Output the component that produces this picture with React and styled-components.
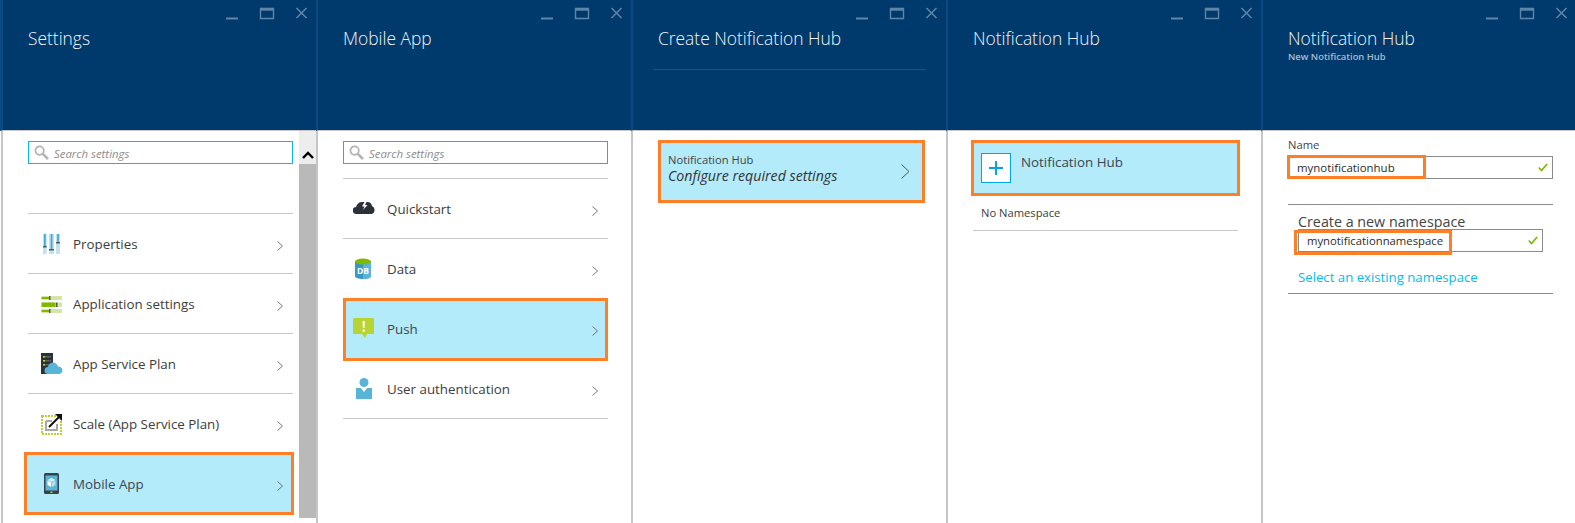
import React from "react";
import styled, { createGlobalStyle } from "styled-components";

const Global = createGlobalStyle`
  html, body { margin: 0; padding: 0; background: #fff; }
  body { font-family: "Open Sans", "Noto Sans", sans-serif; color: #3c3c3c; overflow: hidden; }
`;
const Page = styled.div`
  display: flex;
  width: 1575px;
  height: 523px;
  padding-left: 1px;
  box-sizing: border-box;
  overflow: hidden;
`;
const Blade = styled.section`
  flex: 0 0 315px;
  display: flex;
  flex-direction: column;
  height: 523px;
`;
const Header = styled.header`
  height: 131px;
  flex: none;
  box-sizing: border-box;
  background: #003a6c;
  border-left: ${(p) => (p.$first ? 3 : 2)}px solid #0a4a80;
  margin-left: ${(p) => (p.$first ? -1 : 0)}px;
  border-bottom: 1px solid #c6c6c6;
  padding-right: 8px;
`;
const Controls = styled.div`
  display: flex;
  justify-content: flex-end;
  padding-top: 7px;
  height: 14px;
`;
const Title = styled.h1`
  margin: 5px 0 0 25px;
  font-size: 17.4px;
  line-height: 24px;
  font-weight: 300;
  color: #f2f5f8;
  white-space: nowrap;
`;
const Subtitle = styled.div`
  margin: 1px 0 0 25px;
  font-size: 9.4px;
  line-height: 12px;
  font-weight: 600;
  color: #a7bccf;
`;
const HeaderRule = styled.div`
  margin: 19px 12px 0 20px;
  height: 1px;
  background: #1a5082;
`;
const Body = styled.div`
  flex: 1;
  display: flex;
  border-left: 2px solid #c6c6c6;
  min-height: 0;
`;
const Main = styled.div`
  width: 265px;
  margin-left: 25px;
  padding-top: ${(p) => p.$pt ?? 10}px;
  flex: none;
`;
const Search = styled.div`
  height: 23px;
  box-sizing: border-box;
  border: 1px solid ${(p) => (p.$focus ? "#00bcf2" : "#8a8a8a")};
  display: flex;
  align-items: center;
  padding-left: 5px;
  gap: 5px;
  font-style: italic;
  font-size: 11.4px;
  color: #8c8c8c;
`;
const SearchText = styled.span`
  margin-top: 2px;
`;
const List = styled.div`
  margin-top: ${(p) => p.$gap}px;
`;
const Row = styled.div`
  height: 60px;
  box-sizing: border-box;
  border-top: 1px solid #c8c8c8;
  display: flex;
  align-items: center;
  padding: 0 10px 0 ${(p) => p.$inset}px;
  font-size: 13.35px;
  color: #3c3c3c;
`;
const SelectedRow = styled.div`
  position: relative;
  height: 63px;
  box-sizing: border-box;
  margin: ${(p) => p.$mt || 0}px ${(p) => p.$mr || 0}px -3px ${(p) => -(p.$ml || 0)}px;
  padding: 0 ${(p) => 7 - (p.$mr || 0)}px ${(p) => p.$lift || 0}px ${(p) => p.$inset - 3 + (p.$ml || 0)}px;
  border: 3px solid #ff7f27;
  background: #b3ebfb;
  display: flex;
  align-items: center;
  font-size: 13.35px;
  color: #3c4650;
`;
const RowIcon = styled.span`
  width: 22px;
  height: 22px;
  flex: none;
  margin-right: ${(p) => (p.$inset === 13 ? 10 : 12)}px;
  display: flex;
`;
const Chevron = styled.svg`
  width: 6px;
  height: 10px;
  margin-left: auto;
  margin-top: 4px;
  flex: none;
`;
const LastRule = styled.div`
  height: 1px;
  background: #c8c8c8;
`;
const Scrollbar = styled.div`
  width: 17px;
  margin-left: 6px;
  flex: none;
  display: flex;
  flex-direction: column;
`;
const ScrollUp = styled.div`
  height: 33px;
  background: #ededed;
  display: flex;
  align-items: flex-end;
  justify-content: center;
  padding-bottom: 5px;
  box-sizing: border-box;
`;
const ScrollThumb = styled.div`
  height: 354px;
  background: #b9b9b9;
`;
const ConfigCard = styled.div`
  width: 267px;
  height: 63px;
  box-sizing: border-box;
  margin-top: -1px;
  border: 3px solid #ff7f27;
  background: #b3ebfb;
  display: flex;
  align-items: center;
  padding: 0 12px 0 7px;
`;
const CardText = styled.div`
  display: flex;
  flex-direction: column;
  margin-top: -7px;
`;
const CardLabel = styled.div`
  font-size: 11.2px;
  line-height: 16px;
  color: #444;
`;
const CardValue = styled.div`
  font-size: 14.2px;
  line-height: 16px;
  font-style: italic;
  color: #333;
`;
const BigChevron = styled.svg`
  width: 9px;
  height: 15px;
  margin-left: auto;
  flex: none;
`;
const HubCard = styled.div`
  width: 269px;
  height: 56px;
  box-sizing: border-box;
  margin: -1px 0 0 -2px;
  border: 3px solid #ff7f27;
  background: #b3ebfb;
  display: flex;
  align-items: flex-start;
  padding: 10px 0 0 7px;
  font-size: 13.35px;
  color: #3c4650;
`;
const AddBox = styled.div`
  width: 30px;
  height: 30px;
  box-sizing: border-box;
  background: #fff;
  border: 1px solid #00a4ef;
  display: flex;
  align-items: center;
  justify-content: center;
  margin-right: 10px;
`;
const HubLabel = styled.span`
  line-height: 18px;
`;
const NoNamespace = styled.div`
  padding-left: 8px;
  margin-top: 8px;
  font-size: 11.2px;
  line-height: 18px;
  color: #3c3c3c;
`;
const Rule = styled.div`
  height: 1px;
  background: ${(p) => p.$c || "#c8c8c8"};
  margin-top: ${(p) => p.$mt}px;
`;
const NameLabel = styled.div`
  font-size: 11.2px;
  line-height: 16px;
  color: #444;
  margin-bottom: 3px;
`;
const NamespaceLabel = styled.div`
  font-size: 14.3px;
  line-height: 15px;
  color: #444;
  margin: 9px 0 0 10px;
`;
const Field = styled.div`
  position: relative;
  height: 23px;
  box-sizing: border-box;
  border: 1px solid #8a8a8a;
  margin-left: ${(p) => p.$indent || 0}px;
  margin-right: ${(p) => p.$indent || 0}px;
  display: flex;
  align-items: center;
  justify-content: space-between;
  padding: 0 4px 0 8px;
  font-size: ${(p) => p.$size}px;
  color: #2c2c2c;
`;
const FieldMark = styled.div`
  position: absolute;
  left: ${(p) => p.$l}px;
  top: ${(p) => p.$t}px;
  width: ${(p) => p.$w}px;
  height: ${(p) => p.$h}px;
  box-sizing: border-box;
  border: 3px solid #ff7f27;
`;
const LinkText = styled.a`
  display: block;
  margin: 16px 0 0 10px;
  font-size: 13.2px;
  line-height: 18px;
  color: #00bcf2;
`;

const WindowButtons = () => (
  <Controls>
    <svg width="82" height="14" viewBox="0 0 82 14" fill="none" stroke="#5f86a8">
      <path d="M0 11.5H12" strokeWidth="2" />
      <path d="M34.5 2H47.5V11.5H34.5Z" strokeWidth="1.4" />
      <path d="M34 2.2H48" strokeWidth="3" />
      <path d="M70.500 1L80.500 11M80.500 1L70.500 11" strokeWidth="1.500" />
    </svg>
  </Controls>
);

const ChevronIcon = () => (
  <Chevron viewBox="0 0 6 10" fill="none" stroke="#666" strokeWidth="0.9">
    <path d="M0.5 0.5L5.5 5L0.5 9.5" />
  </Chevron>
);

const SearchGlass = () => (
  <svg width="15" height="15" viewBox="0 0 15 15" fill="none" stroke="#b4b4b4">
    <circle cx="5.6" cy="5.6" r="4.2" strokeWidth="1.8" />
    <path d="M8.8 8.8L14 14" strokeWidth="2.6" />
  </svg>
);

const PropsIcon = () => (
  <svg viewBox="0 0 22 22" width="22" height="22">
    <path d="M2 1h3.700v20H2zM8 1h5v20H8zM15 1h4v20h-4z" fill="#bfe3f2" />
    <path d="M3 1h1.700v12H3zM9.700 1h1.700v15H9.700zM16.200 1h1.700v8h-1.700z" fill="#41a9d6" />
    <path d="M2 13h3.700v1.600H2zM8 16h5v1.600H8zM15 9h4v1.600h-4z" fill="#59595b" />
  </svg>
);
const AppSettingsIcon = () => (
  <svg viewBox="0 0 22 22" width="22" height="22">
    <path d="M0.500 3h20.500v4H0.500zM0.500 9.500h20.500v4.500H0.500zM0.500 16h20.500v4H0.500z" fill="#d3e6a8" />
    <path d="M0.500 4h8v2h-8zM0.500 9.500h14v4.500h-14zM0.500 17h8v2h-8z" fill="#7fba00" />
    <path d="M8 3h1.500v4H8zM15 9.500h1.500v4.500H15zM8 16h1.500v4H8z" fill="#59595b" />
  </svg>
);
const PlanIcon = () => (
  <svg viewBox="0 0 22 22" width="22" height="22">
    <path d="M0 0h12v21H0z" fill="#2b3138" />
    <path d="M2 3h8v1.400H2zM2 7h8v1.400H2zM2 11h8v1.400H2z" fill="#5a6068" />
    <path d="M2 3h2v1.400H2zM2 7h2v1.400H2zM2 11h2v1.400H2z" fill="#b8d432" />
    <path d="M7 21a3.500 3.500 0 0 1 0-7c.5-3 2.500-4.500 5-4.500 2.600 0 4.500 1.700 5 4.200a3.700 3.700 0 0 1 4.500 3.500c0 2.200-1.500 3.800-3.800 3.800z" fill="#59b4d9" />
  </svg>
);
const ScaleIcon = () => (
  <svg viewBox="0 0 22 22" width="22" height="22" fill="none">
    <rect x="1" y="3" width="19" height="18" stroke="#b8d432" strokeWidth="2" strokeDasharray="2 1" />
    <path d="M5 8h6M5 8v9h11v-6" stroke="#a8a8a8" strokeWidth="2" />
    <path d="M8 14L19 3" stroke="#111" strokeWidth="2" />
    <path d="M14 1h7v7z" fill="#111" />
  </svg>
);
const MobileIcon = () => (
  <svg viewBox="0 0 22 22" width="22" height="22">
    <rect x="3" y="0" width="15" height="21" rx="1.500" fill="#3a4048" />
    <rect x="4.500" y="2.500" width="12" height="15" fill="#59b4d9" />
    <path d="M10.500 5l4 2-4 2-4-2z" fill="#d8f0fa" />
    <path d="M6.500 7.500l3.700 2v4.500l-3.700-2z" fill="#fff" />
    <path d="M14.500 7.500l-3.700 2v4.500l3.700-2z" fill="#b3e0f2" />
    <rect x="9.500" y="18.500" width="2" height="1.500" fill="#b8d432" />
  </svg>
);
const QuickIcon = () => (
  <svg viewBox="0 0 22 22" width="22" height="22">
    <path d="M3.500 16a3.500 3.500 0 0 1-.5-7c.8-3 3-5 6-5h5.500c2.500 0 4 1.500 4.500 4a4 4 0 0 1 2.500 4c0 2.500-1.500 4-3.500 4z" fill="#2b3138" />
    <path d="M12 3l-3 5.500h2.500L10 12l4.500-5h-2.500l2-4z" fill="#fff" />
  </svg>
);
const DataIcon = () => (
  <svg viewBox="0 0 22 22" width="22" height="22">
    <path d="M2 3v15c0 2 3.500 3 8 3s8-1 8-3V3z" fill="#3999c6" />
    <path d="M10 6v15c4.500 0 8-1 8-3V3z" fill="#59b4d9" />
    <ellipse cx="10" cy="3.500" rx="8" ry="3" fill="#7fba00" />
    <text x="10" y="16" textAnchor="middle" fontSize="8.500" fontWeight="700" fill="#fff" fontFamily="Open Sans, sans-serif">DB</text>
  </svg>
);
const PushIcon = () => (
  <svg viewBox="0 0 22 22" width="22" height="22">
    <path d="M1 0h19a1 1 0 0 1 1 1v14a1 1 0 0 1-1 1h-6l-2 4-3-4H1a1 1 0 0 1-1-1V1a1 1 0 0 1 1-1z" fill="#b8d432" />
    <path d="M9.500 3h2.400l-.4 7h-1.600zM9.600 11.500h2.200v2.200H9.600z" fill="#fff" />
  </svg>
);
const UserIcon = () => (
  <svg viewBox="0 0 22 22" width="22" height="22">
    <circle cx="11" cy="4.500" r="4.500" fill="#59b4d9" />
    <path d="M3 10h5l3 3 3-3h5v11H3z" fill="#59b4d9" />
    <path d="M8 10h6l-3 4z" fill="#fff" />
  </svg>
);
const Check = () => (
  <svg width="10" height="9" viewBox="0 0 10 9" fill="none" stroke="#7fba00" strokeWidth="1.800">
    <path d="M0.800 4.500L3.500 7.500L9.200 1" />
  </svg>
);

const Nav = ({ icon, label, inset }) => (
  <Row $inset={inset}>
    <RowIcon $inset={inset}>{icon}</RowIcon>
    {label}
    <ChevronIcon />
  </Row>
);

const SearchBox = ({ focus }) => (
  <Search $focus={focus}>
    <SearchGlass />
    <SearchText>Search settings</SearchText>
  </Search>
);

export default function App() {
  return (
    <Page>
      <Global />
      <Blade>
        <Header $first>
          <WindowButtons />
          <Title>Settings</Title>
        </Header>
        <Body>
          <Main>
            <SearchBox focus />
            <List $gap={49}>
              <Nav inset={13} icon={<PropsIcon />} label="Properties" />
              <Nav inset={13} icon={<AppSettingsIcon />} label="Application settings" />
              <Nav inset={13} icon={<PlanIcon />} label="App Service Plan" />
              <Nav inset={13} icon={<ScaleIcon />} label="Scale (App Service Plan)" />
              <SelectedRow $inset={13} $ml={4} $mr={-1} $mt={-1}>
                <RowIcon $inset={13}><MobileIcon /></RowIcon>
                Mobile App
                <ChevronIcon />
              </SelectedRow>
            </List>
          </Main>
          <Scrollbar>
            <ScrollUp>
              <svg width="12" height="8" viewBox="0 0 12 8" fill="none" stroke="#000" strokeWidth="2.400">
                <path d="M1 7L6 2l5 5" />
              </svg>
            </ScrollUp>
            <ScrollThumb />
          </Scrollbar>
        </Body>
      </Blade>

      <Blade>
        <Header>
          <WindowButtons />
          <Title>Mobile App</Title>
        </Header>
        <Body>
          <Main>
            <SearchBox />
            <List $gap={14}>
              <Nav inset={10} icon={<QuickIcon />} label="Quickstart" />
              <Nav inset={10} icon={<DataIcon />} label="Data" />
              <SelectedRow $inset={10} $lift={2}>
                <RowIcon $inset={10}><PushIcon /></RowIcon>
                Push
                <ChevronIcon />
              </SelectedRow>
              <Nav inset={10} icon={<UserIcon />} label="User authentication" />
              <LastRule />
            </List>
          </Main>
        </Body>
      </Blade>

      <Blade>
        <Header>
          <WindowButtons />
          <Title>Create Notification Hub</Title>
          <HeaderRule />
        </Header>
        <Body>
          <Main>
            <ConfigCard>
              <CardText>
                <CardLabel>Notification Hub</CardLabel>
                <CardValue>Configure required settings</CardValue>
              </CardText>
              <BigChevron viewBox="0 0 9 15" fill="none" stroke="#555" strokeWidth="1">
                <path d="M0.500 0.500L8 7.500L0.500 14.500" />
              </BigChevron>
            </ConfigCard>
          </Main>
        </Body>
      </Blade>

      <Blade>
        <Header>
          <WindowButtons />
          <Title>Notification Hub</Title>
        </Header>
        <Body>
          <Main>
            <HubCard>
              <AddBox>
                <svg width="16" height="16" viewBox="0 0 16 16" stroke="#00a4ef" strokeWidth="2">
                  <path d="M8 1v14M1 8h14" />
                </svg>
              </AddBox>
              <HubLabel>Notification Hub</HubLabel>
            </HubCard>
            <NoNamespace>No Namespace</NoNamespace>
            <Rule $mt={8} />
          </Main>
        </Body>
      </Blade>

      <Blade>
        <Header>
          <WindowButtons />
          <Title>Notification Hub</Title>
          <Subtitle>New Notification Hub</Subtitle>
        </Header>
        <Body>
          <Main $pt={6}>
            <NameLabel>Name</NameLabel>
            <Field $size={11.45}>
              <FieldMark $l={-2} $t={-2} $w={139} $h={24} />
              mynotificationhub
              <Check />
            </Field>
            <Rule $mt={25} $c="#8a8a8a" />
            <NamespaceLabel>Create a new namespace</NamespaceLabel>
            <Field $indent={10} $size={11.3}>
              <FieldMark $l={-5} $t={0} $w={158} $h={25} />
              mynotificationnamespace
              <Check />
            </Field>
            <LinkText>Select an existing namespace</LinkText>
            <Rule $mt={7} $c="#8a8a8a" />
          </Main>
        </Body>
      </Blade>
    </Page>
  );
}
